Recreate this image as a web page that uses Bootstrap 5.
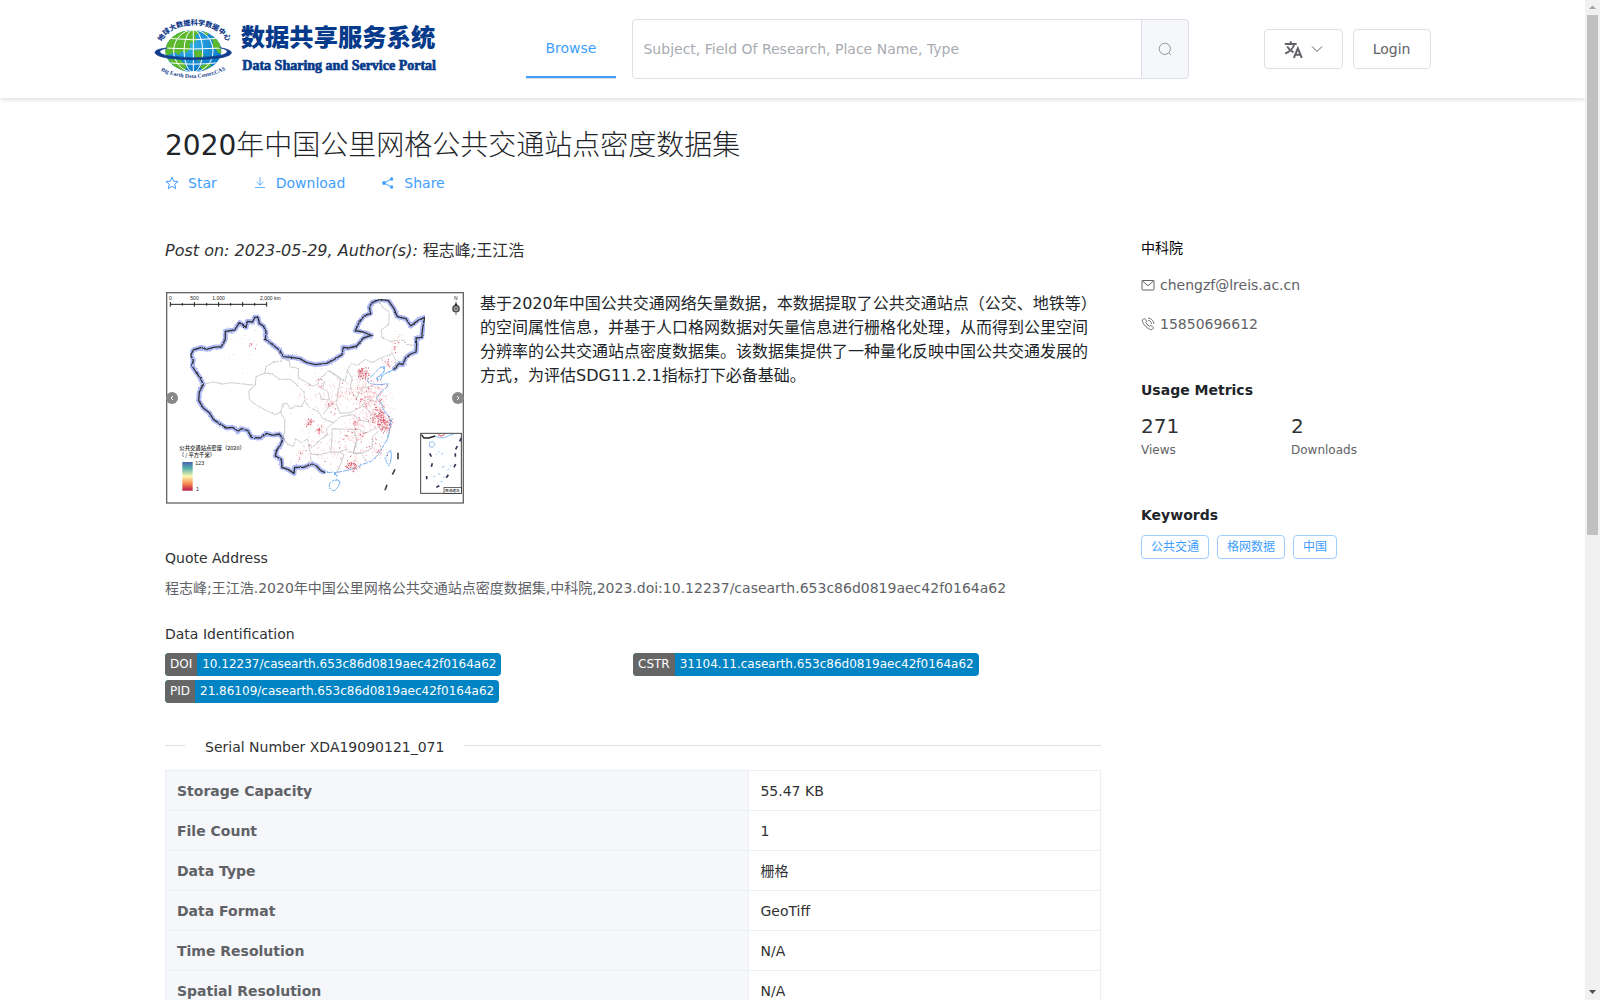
<!DOCTYPE html>
<html lang="en">
<head>
<meta charset="utf-8">
<meta name="viewport" content="width=device-width, initial-scale=1">
<title>2020年中国公里网格公共交通站点密度数据集</title>
<link href="https://cdn.jsdelivr.net/npm/bootstrap@5.3.0/dist/css/bootstrap.min.css" rel="stylesheet">
<style>
:root{--ink:#303133;--soft:#606266;--line:#dcdfe6;--accent:#409eff;scrollbar-width:none}
body{font-family:"DejaVu Sans","Noto Sans CJK SC",sans-serif;font-size:14px;line-height:20px;color:var(--ink);background:#fff;padding-right:15px}
a{text-decoration:none}
.site-header{padding:19px 0;box-shadow:0 2px 4px rgba(0,0,0,.12)}
.header-inner{max-width:1276px}
.page-inner{max-width:1255px;padding-top:30px}
.logo-link{width:282px;margin-right:89px}
.main-nav{height:60px;border-bottom:1px solid var(--line);margin-right:16px}
.main-nav a{color:var(--accent);padding:0 20px;border-bottom:2px solid var(--accent)}
.search-group{height:60px;margin-right:75px}
.search-group .form-control{font-size:14px;padding:0 10px;border-color:var(--line);border-radius:4px 0 0 4px;color:var(--soft)}
.search-group .form-control::placeholder{color:#a8abb2}
.search-group .btn{width:48px;background:#f5f7fa;border-color:var(--line);border-radius:0 4px 4px 0;color:#909399}
.header-actions{gap:10px}
.plain-btn{height:40px;border-color:var(--line);border-radius:4px;font-size:14px;line-height:20px;color:var(--soft);padding:0 19px;background:#fff}
.page-title{font-size:28px;line-height:36px;font-weight:300;color:#212529}
.page-title span{font-family:"DejaVu Sans",sans-serif;font-weight:400}
.action-row{gap:36px;margin-top:9px}
.action-row a{color:var(--accent);gap:9px}
.columns{margin-top:45px;gap:40px}
.side-col{width:279px}
.post-line{font-size:16px;line-height:26px}
.map-row{margin-top:28px;gap:15px}
.map-frame{width:300px;height:212px}
.map-frame svg.map-art{display:block;margin-left:1px}
.map-arrow{width:12px;height:12px;top:100px;margin:0 1px;background:#888;color:#fff;border:0;border-radius:50%}
.summary{font-size:16px;line-height:24px;color:#212529}
.quote-title{margin-top:44px}
.quote-text{margin-top:10px;color:var(--soft)}
.ident-title{margin-top:26px}
.ident-row{margin-top:9px;row-gap:4px}
.ident-tag{display:inline-flex;height:23px;line-height:23px;font-size:12px;color:#fff;background:#0084c4;border-radius:4px;overflow:hidden}
.ident-tag span{padding:0 5px}
.ident-tag .tag-key{background:#666}
.serial-row{margin-top:34px;gap:20px}
.serial-row i{height:1px;background:var(--line);margin-bottom:3px}
.serial-row i:first-child{width:20px}
.facts{margin-top:13px;font-size:14px;line-height:20px;border-color:#ebeef5}
.facts>tbody>tr>*{padding:10px 11px 9px;color:var(--ink)}
.facts>tbody>tr>th{width:62.4%;background:#f5f7fb;color:var(--soft)}
.contact{color:var(--soft);gap:5px}
.mt-email{margin-top:17px}.mt-phone{margin-top:19px}
.block-gap{margin-top:46px}
.side-head{font-size:14px;line-height:20px;color:#212529}
.metrics{margin-top:12px}
.metrics div{width:150px;flex-shrink:0;font-size:12px;line-height:18px;color:var(--soft)}
.metrics b{display:block;font-size:20px;line-height:29px;font-weight:400;color:var(--ink)}
.key-list{margin-top:10px}
.key-list a{height:24px;line-height:22px;font-size:12px;color:var(--accent);border:1px solid #9fceff;border-radius:4px;padding:0 9px}
.scroll-rail{width:15px;background:#f1f1f1;z-index:10}
.scroll-rail i{width:11px;height:520px;background:#c1c1c1}
</style>
<script src="https://cdn.jsdelivr.net/npm/bootstrap@5.3.0/dist/js/bootstrap.bundle.min.js" defer></script>
</head>
<body>
<header class="site-header bg-white">
 <div class="header-inner mx-auto d-flex align-items-center">
  <a class="logo-link flex-shrink-0" href="#" aria-label="Data Sharing and Service Portal">
  <svg width="282" height="60" viewBox="45 57 846 180" class="d-block" overflow="visible">
   <defs>
    <radialGradient id="sea" cx=".4" cy=".35" r=".7"><stop offset="0" stop-color="#36b4ea"/><stop offset="1" stop-color="#0875c6"/></radialGradient>
    <clipPath id="globe"><ellipse cx="160" cy="153" rx="84" ry="63"/></clipPath>
    <path id="arcTop" d="M66 126 A 99 64 0 0 1 259 124 L 275 140"/>
    <path id="arcLow" d="M62 212 Q160 258 262 207 L 290 195"/>
   </defs>
   <ellipse cx="160" cy="153" rx="84" ry="63" fill="url(#sea)"/>
   <g clip-path="url(#globe)">
    <path d="M80 125 Q105 98 130 93 L170 90 178 100 164 107 172 118 160 130 149 128 151 146 138 158 125 154 116 166 104 156 92 162 76 170 74 145Z" fill="#5cb82c"/>
    <path d="M193 92 L207 96 203 106 192 102ZM212 112 L240 122 246 160 236 160 226 146 216 138 220 126ZM160 152 L182 150 192 164 180 184 168 178ZM82 176 L122 180 140 200 132 214 104 200ZM178 198 L206 190 216 196 190 212Z" fill="#5cb82c"/>
    <g fill="none" stroke="#fff" stroke-width="3"><ellipse cx="160" cy="153" rx="28" ry="63"/><ellipse cx="160" cy="153" rx="59" ry="63"/><path d="M160 88V218M70 144Q160 150 250 144M85 115Q160 124 235 115M85 188Q160 197 235 188"/></g>
   </g>
   <path d="M82 144 C28 148 36 168 88 175 Q160 184 232 175 C284 168 290 150 238 143 C275 151 266 162 228 169 Q160 178 92 169 C52 162 50 151 82 144Z" fill="#123d8c" stroke="#123d8c" stroke-width="2"/>
   <g fill="#123d8c" font-weight="700">
    <text font-family="Noto Sans CJK SC" font-size="21" font-weight="900"><textPath href="#arcTop">地球大数据科学数据中心</textPath></text>
    <text font-family="Liberation Serif" font-size="17"><textPath href="#arcLow">Big Earth Data Center,CAS</textPath></text>
    <text x="302" y="138" font-family="Noto Sans CJK SC" font-size="73" font-weight="900" fill="#063a8a">数据共享服务系统</text>
    <text x="307" y="210" font-family="Liberation Serif" font-size="42" fill="#063a8a" stroke="#063a8a" stroke-width="2">Data Sharing and Service Portal</text>
   </g>
  </svg></a>
  <nav class="main-nav d-flex"><a class="d-flex align-items-center" href="#">Browse</a></nav>
  <form class="search-group input-group flex-grow-1 w-auto flex-nowrap" role="search">
   <input class="form-control" type="search" aria-label="Search" placeholder="Subject, Field Of Research, Place Name, Type">
   <button class="btn d-flex align-items-center justify-content-center p-0" type="button" aria-label="Search"><svg width="14" height="14" viewBox="0 0 14 14" fill="none" stroke="currentColor"><circle cx="6.8" cy="6.8" r="5.6"/><path d="M10.8 10.8 12.8 12.8"/></svg></button>
  </form>
  <div class="header-actions d-flex flex-shrink-0">
   <button class="btn plain-btn d-flex align-items-center gap-2" type="button" aria-label="Language">
    <svg width="19" height="19" viewBox="0 0 24 24" fill="none" stroke="currentColor" stroke-width="2.500"><path d="M1 5H16M8.500 1.500V5M4 8C6 12 10 14.500 12 15.500M13 5C12 10 7 15 1.500 17M12.500 22.500 17.500 10.500 22.500 22.500M14.500 18.500H20.500"/></svg>
    <svg width="12" height="12" viewBox="0 0 12 12" fill="none" stroke="currentColor"><path d="M1 3.500 6 8.500 11 3.500"/></svg>
   </button>
   <button class="btn plain-btn" type="button">Login</button>
  </div>
 </div>
</header>

<main class="page-inner mx-auto">
 <h1 class="page-title mb-0"><span>2020</span>年中国公里网格公共交通站点密度数据集</h1>
 <div class="action-row d-flex">
  <a class="d-flex align-items-center" href="#"><svg width="14" height="14" viewBox="0 0 14 14" fill="none" stroke="currentColor"><path d="M7 1.200 8.700 5.200 13 5.500 9.700 8.300 10.800 12.600 7 10.300 3.200 12.600 4.300 8.300 1 5.500 5.300 5.200Z"/></svg>Star</a>
  <a class="d-flex align-items-center" href="#"><svg width="14" height="14" viewBox="0 0 14 14" fill="none" stroke="currentColor" stroke-width=".8"><path d="M7 1V9M3.500 5.700 7 9.200 10.500 5.700M2 11.500H12"/></svg>Download</a>
  <a class="d-flex align-items-center" href="#"><svg width="14" height="14" viewBox="0 0 14 14" fill="currentColor"><path d="M10.500 3 3 7 10.500 11" fill="none" stroke="currentColor"/><circle cx="10.600" cy="3" r="1.700"/><circle cx="3" cy="7" r="1.900"/><circle cx="10.600" cy="11" r="1.700"/></svg>Share</a>
 </div>

 <div class="columns d-flex">
  <div class="flex-grow-1">
   <div class="post-line"><em>Post on: 2023-05-29, Author(s): </em>程志峰<em>;</em>王江浩</div>
   <div class="map-row d-flex">
    <div class="map-frame position-relative flex-shrink-0">
     <svg class="map-art" width="298" height="212" viewBox="18 22 894 636" role="img" aria-label="Station density map of China">
      <defs>
       <linearGradient id="ramp" x2="0" y2="1"><stop stop-color="#4a62ad"/><stop offset=".22" stop-color="#55b0ad"/><stop offset=".5" stop-color="#fbf8b0"/><stop offset=".75" stop-color="#f88b51"/><stop offset="1" stop-color="#b91648"/></linearGradient>
       <filter id="rough" x="0" y="0" width="1" height="1"><feTurbulence type="fractalNoise" baseFrequency=".16" numOctaves="2" seed="4"/><feDisplacementMap in="SourceGraphic" scale="7" xChannelSelector="R" yChannelSelector="G"/></filter>
       <path id="land" d="M700 256 L718 236 728 240 738 218 752 208 768 202 770 180 768 160 785 158 788 130 794 98 776 106 752 124 738 102 712 96 702 72 685 48 660 44 636 54 628 68 632 86 612 94 598 112 586 138 610 142 634 152 610 160 590 184 566 190 550 188 546 210 520 226 500 236 466 240 440 234 420 222 394 218 370 216 358 196 338 180 316 164 318 140 310 124 298 116 294 98 284 98 278 112 262 110 258 128 238 114 224 136 196 140 196 164 184 186 160 188 140 194 124 188 100 196 92 212 100 226 96 244 108 262 122 282 130 300 118 322 116 348 130 370 148 384 160 404 178 416 200 430 218 428 234 440 244 432 264 438 274 458 300 460 320 446 338 452 358 448 368 462 362 480 350 496 346 514 364 524 366 548 384 554 402 566 404 548 430 548 456 538 470 544 482 558 496 564"/>
      </defs>
      <rect x="20" y="24" width="890" height="631" fill="#fff" stroke="#666" stroke-width="4"/>
      <g stroke="#222" stroke-width="3" fill="none"><path d="M31 59H320M31 52V66M103 52V66M176 52V66M248 52V66M320 52V66M67 55V63M140 55V63M212 55V63M284 55V63"/></g>
      <g font-family="Liberation Sans" font-size="15" fill="#222"><text x="27" y="46">0</text><text x="91" y="46">500</text><text x="157" y="46">1,000</text><text x="300" y="46">2,000 km</text><text x="882" y="47">N</text></g>
      <path d="M888 50V92M878 72H898M881 64 895 80M895 64 881 80" stroke="#444" stroke-width="2"/><circle cx="888" cy="72" r="9" fill="none" stroke="#555" stroke-width="5"/><path d="M888 54 893 62H883Z" fill="#222"/>
      <g filter="url(#rough)" fill="none" stroke-linejoin="round">
       <use href="#land" stroke="#aeb9f7" stroke-width="15"/>
       <use href="#land" stroke="#333" stroke-width="4"/>
       <path d="M700 256 684 262 668 272 660 288 648 282 672 262 674 246 660 248 640 270 622 286 628 296 650 300 684 298 682 306 660 326 648 342 664 356 670 374 684 392 692 410 688 424 696 404 688 440 682 464 666 490 654 510 634 530 606 540 580 552 548 560 524 564 532 576 520 562 498 564" stroke="#79b4f0" stroke-width="3"/>
       <path d="M508 596 Q524 580 540 590 Q540 606 524 618 Q506 618 508 596ZM692 496 Q676 508 678 530 L686 544 Q698 524 692 496Z" stroke="#79b4f0" stroke-width="3"/>
       <g stroke="#b4b4b4" stroke-width="2"><path d="M132 298 160 292 190 298 212 294 250 298 286 302 288 276 314 266 318 246 342 232 364 230 368 216M286 302 266 320 268 344 290 362 316 376 344 390 362 382 368 358 380 356 392 372 408 364 424 366 434 348 432 322 410 300 390 284 360 284 336 268 314 266M368 216 388 230 390 246 416 252 414 280 434 290 458 304 472 300 480 282 494 290 486 312 504 322 508 346 484 344 478 322M362 382 374 404 374 440 368 460M434 348 450 370 474 380 488 402 520 414 500 432 502 452 484 462 462 484 446 484 444 462 424 474 406 462 402 484 388 482 368 460"/><path d="M480 282 508 258 530 278 556 290 562 256 574 236 592 242 616 224 636 234 662 220 680 214 698 206 708 230 706 250M656 50 670 70 688 82 686 120 664 136 666 160 692 170 730 166 742 180 768 182M508 258 542 280 534 322 528 354 540 386 572 384 604 366 622 344 648 350M562 256 576 280 570 316 590 340 606 310 638 304M594 266 612 252 626 270 612 284 594 266M524 354 508 364 490 388M520 414 542 396 578 390 598 406 628 412 644 398 624 376 606 362M516 432 560 434 598 434 616 446 640 434 662 424 688 440M516 432 516 460 512 502 538 502 560 494 580 506 590 466 582 436M590 466 580 506 612 504 636 490 638 456 654 440M446 484 452 508 480 510 512 502M450 510 456 540M538 502 552 510 544 534 530 562M580 506 604 506 618 530"/></g>
      </g>
      <path id="dotsLight" stroke="#f0acb6" stroke-width="2"/><path id="dotsDark" stroke="#d45263" stroke-width="3"/>
      <g stroke="#445" stroke-width="5"><path d="M714 504V524M705 554 697 570M681 600 675 617"/></g>
      <rect x="782" y="446" width="122" height="180" fill="#fff" stroke="#444" stroke-width="3"/>
      <path d="M784 450 792 460 806 460 826 454" stroke="#222" stroke-width="4" fill="none"/><path d="M826 456 850 460 870 452 882 448M808 474 818 470 825 478 818 488 808 486ZM834 500l4 2M844 508l6-2M828 508l3 3M846 548l7-3M862 556l6-4M834 566l6 4M820 574l5 3M850 580l5-5M870 542l4 3M842 590l6 2" fill="none" stroke="#79b4f0" stroke-width="2.500"/><path d="M834 450l10 4 10-4" stroke="#e67b88" stroke-width="4" fill="none"/>
      <path d="M904 460l-5 10M892 484l-5 10M809 506l5 10M886 506v10M817 536l-3 10M887 538l-5 10M800 574v10M865 570l-6 9M838 603l-9 5" stroke="#335" stroke-width="5"/>
      <rect x="852" y="608" width="52" height="18" fill="#fff" stroke="#222" stroke-width="2"/><text x="855" y="621" font-family="Noto Sans CJK SC" font-size="11">南海诸岛</text>
      <g font-family="Noto Sans CJK SC" font-size="16" font-weight="500" fill="#222"><text x="58" y="497">公共交通站点密度（2020）</text><text x="56" y="516">（ / 平方千米）</text><text x="106" y="541" font-family="Liberation Sans">123</text><text x="108" y="618" font-family="Liberation Sans">1</text></g>
      <rect x="67" y="532" width="31" height="86" fill="url(#ramp)"/>
     </svg>
     <button class="map-arrow position-absolute start-0 p-0 d-flex" type="button" aria-label="Previous"><svg width="12" height="12" fill="none" stroke="currentColor"><path d="M7 4 5 6 7 8"/></svg></button>
     <button class="map-arrow position-absolute end-0 p-0 d-flex" type="button" aria-label="Next"><svg width="12" height="12" fill="none" stroke="currentColor"><path d="M5 4 7 6 5 8"/></svg></button>
    </div>
    <p class="summary mb-0">基于2020年中国公共交通网络矢量数据，本数据提取了公共交通站点（公交、地铁等）的空间属性信息，并基于人口格网数据对矢量信息进行栅格化处理，从而得到公里空间分辨率的公共交通站点密度数据集。该数据集提供了一种量化反映中国公共交通发展的方式，为评估SDG11.2.1指标打下必备基础。</p>
   </div>
   <div class="quote-title">Quote Address</div>
   <div class="quote-text">程志峰;王江浩.2020年中国公里网格公共交通站点密度数据集,中科院,2023.doi:10.12237/casearth.653c86d0819aec42f0164a62</div>
   <div class="ident-title">Data Identification</div>
   <div class="ident-row row gx-0">
    <div class="col-6 d-flex"><a class="ident-tag" href="#"><span class="tag-key">DOI</span><span>10.12237/casearth.653c86d0819aec42f0164a62</span></a></div>
    <div class="col-6 d-flex"><a class="ident-tag" href="#"><span class="tag-key">CSTR</span><span>31104.11.casearth.653c86d0819aec42f0164a62</span></a></div>
    <div class="col-6 d-flex"><a class="ident-tag" href="#"><span class="tag-key">PID</span><span>21.86109/casearth.653c86d0819aec42f0164a62</span></a></div>
   </div>
   <div class="serial-row d-flex align-items-center"><i></i><span>Serial Number XDA19090121_071</span><i class="flex-grow-1"></i></div>
   <table class="facts table table-bordered mb-5">
    <tbody>
     <tr><th scope="row">Storage Capacity</th><td>55.47 KB</td></tr>
     <tr><th scope="row">File Count</th><td>1</td></tr>
     <tr><th scope="row">Data Type</th><td>栅格</td></tr>
     <tr><th scope="row">Data Format</th><td>GeoTiff</td></tr>
     <tr><th scope="row">Time Resolution</th><td>N/A</td></tr>
     <tr><th scope="row">Spatial Resolution</th><td>N/A</td></tr>
    </tbody>
   </table>
  </div>

  <aside class="side-col flex-shrink-0">
   <div class="text-black">中科院</div>
   <div class="contact mt-email d-flex align-items-center"><svg width="14" height="14" viewBox="0 0 14 14" fill="none" stroke="currentColor"><rect x="1" y="2.500" width="12" height="9.500" rx=".5"/><path d="M1.500 3 7 7.800 12.500 3"/></svg>chengzf@lreis.ac.cn</div>
   <div class="contact mt-phone d-flex align-items-center"><svg width="14" height="14" viewBox="0 0 14 14" fill="none" stroke="currentColor" stroke-width=".9"><path d="M3.200 1.300 1.300 3.200C1 6.500 7 13 10.800 12.700L12.700 10.800 9.800 8.300 8.300 9.400 4.600 5.700 5.700 4.200ZM7 1.200C10 1 13 4 12.800 7M7.200 3.500C9 3.500 10.500 5 10.500 6.800"/></svg>15850696612</div>
   <h2 class="side-head block-gap mb-0 fw-bold">Usage Metrics</h2>
   <div class="metrics d-flex"><div><b>271</b>Views</div><div><b>2</b>Downloads</div></div>
   <h2 class="side-head block-gap mb-0 fw-bold">Keywords</h2>
   <div class="key-list d-flex gap-2"><a href="#">公共交通</a><a href="#">格网数据</a><a href="#">中国</a></div>
  </aside>
 </div>
</main>

<div class="scroll-rail position-fixed top-0 end-0 bottom-0 d-flex flex-column align-items-center" aria-hidden="true">
 <svg width="15" height="15"><path d="M4 9H11L7.500 5.500Z" fill="#a3a3a3"/></svg><i></i>
 <svg class="mt-auto" width="15" height="15"><path d="M4 5H11L7.500 9Z" fill="#505050"/></svg>
</div>
<script>
// Scatter station dots around the main cities: [x, y, spread, count, share of dense dots]
const cities=[[606,266,13,90,.7],[628,322,30,150,.25],[660,400,24,230,.55],[672,425,16,80,.4],[576,543,14,90,.6],[446,414,9,35,.5],[478,438,10,40,.4],[584,416,12,35,.5],[640,350,35,80,.15],[510,360,14,35,.3],[560,320,28,60,.15],[566,456,18,30,.3],[606,450,16,30,.3],[600,370,50,90,.1],[684,232,12,22,.4],[702,192,9,14,.4],[710,162,14,14,.3],[480,500,50,60,.08],[650,490,25,50,.2],[480,300,30,35,.1],[272,178,5,8,.6],[260,190,55,14,.1],[420,506,14,14,.2],[560,500,50,70,.08],[460,350,50,30,.1]];
let seed=7;const rnd=()=>(seed=(seed*16807)%2147483647)/2147483647;
let light="",dark="";
for(const [x,y,s,n,d] of cities)for(let i=0;i<n;i++){
 const px=Math.round(x+(rnd()+rnd()+rnd()-1.5)*s*1.3),py=Math.round(y+(rnd()+rnd()+rnd()-1.5)*s*1.3);
 if(rnd()<d*.6)dark+=`M${px} ${py}h3`;else light+=`M${px} ${py}h3`;
}
document.getElementById("dotsLight").setAttribute("d",light);
document.getElementById("dotsDark").setAttribute("d",dark);
</script>
</body>
</html>
